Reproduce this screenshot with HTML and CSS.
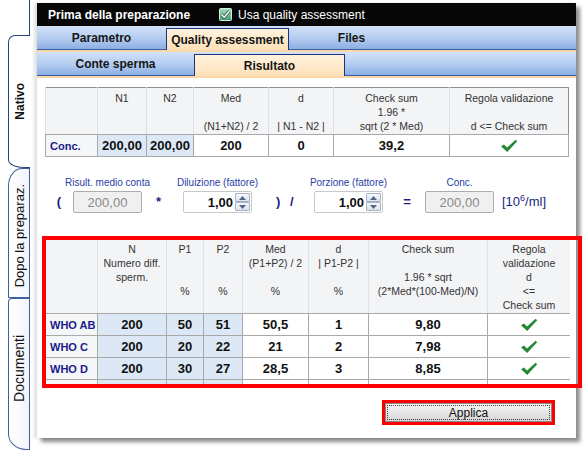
FILE: index.html
```html
<!DOCTYPE html>
<html lang="it">
<head>
    <meta charset="UTF-8">
    <title>Quality assessment - Risultato</title>
    <link rel="stylesheet" href="styles.css">
</head>
<body>
<div class="screen">
    <nav class="side-tabs">
        <div class="side-top"></div>
        <div class="side-tab active"><span>Nativo</span></div>
        <div class="side-tab dopo"><span>Dopo la preparaz.</span></div>
        <div class="side-tab docs"><span>Documenti</span></div>
    </nav>

    <div class="panel">
        <div class="panel-head">
            <span class="panel-title">Prima della preparazione</span>
            <span class="qa-check">
                <svg width="13" height="13" viewBox="0 0 13 13">
                    <defs>
                        <linearGradient id="cb" x1="0" y1="0" x2="0" y2="1">
                            <stop offset="0" stop-color="#a9e0c2"/>
                            <stop offset="1" stop-color="#3f9b6c"/>
                        </linearGradient>
                    </defs>
                    <rect x="0.5" y="0.5" width="12" height="12" rx="1" fill="url(#cb)" stroke="#d8efe2"/>
                    <path d="M2.5 6.5 L5.2 9.3 L10.5 3" fill="none" stroke="#1d4d35" stroke-width="3"/>
                    <path d="M2.5 6.5 L5.2 9.3 L10.5 3" fill="none" stroke="#fff" stroke-width="1.6"/>
                </svg>
                Usa quality assessment
            </span>
        </div>

        <div class="tabbar">
            <div class="tab w-param">Parametro</div>
            <div class="tab active w-qa">Quality assessment</div>
            <div class="tab w-files">Files</div>
        </div>
        <div class="stripe"></div>
        <div class="tabbar">
            <div class="tab w-conte">Conte sperma</div>
            <div class="tab active w-ris">Risultato</div>
        </div>
        <div class="stripe"></div>

        <div class="content">
            <table class="grid results">
                <colgroup>
                    <col style="width:52px"><col style="width:49px"><col style="width:47px"><col style="width:75px">
                    <col style="width:65px"><col style="width:116px"><col style="width:119px">
                </colgroup>
                <tr class="head">
                    <th></th>
                    <th>N1</th>
                    <th>N2</th>
                    <th>Med<br><br>(N1+N2) / 2</th>
                    <th>d<br><br>| N1 - N2 |</th>
                    <th>Check sum<br>1.96 *<br>sqrt (2 * Med)</th>
                    <th>Regola validazione<br><br>d &lt;= Check sum</th>
                </tr>
                <tr>
                    <td class="row-label">Conc.</td>
                    <td class="entered">200,00</td>
                    <td class="entered">200,00</td>
                    <td>200</td>
                    <td>0</td>
                    <td>39,2</td>
                    <td><svg class="ok" width="18" height="14" viewBox="0 0 18 14"><path d="M1 7.2 L4 5.4 L7 8.6 L15.6 0.8 L17.2 2.2 L7.2 13 Z" fill="#258a36"/></svg></td>
                </tr>
            </table>

            <div class="calc">
                <span class="op open">(</span>
                <div class="field">
                    <div class="field-label">Risult. medio conta</div>
                    <div class="box readonly">200,00</div>
                </div>
                <span class="op times">*</span>
                <div class="field">
                    <div class="field-label">Diluizione (fattore)</div>
                    <div class="box spin">
                        <span>1,00</span>
                        <span class="spinner">
                            <span class="spin-btn"><svg width="7" height="4" viewBox="0 0 7 4"><path d="M0 4 L3.5 0 L7 4 Z" fill="#53658c"/></svg></span>
                            <span class="spin-btn"><svg width="7" height="4" viewBox="0 0 7 4"><path d="M0 0 L3.5 4 L7 0 Z" fill="#53658c"/></svg></span>
                        </span>
                    </div>
                </div>
                <span class="op close">)</span>
                <span class="op slash">/</span>
                <div class="field">
                    <div class="field-label">Porzione (fattore)</div>
                    <div class="box spin">
                        <span>1,00</span>
                        <span class="spinner">
                            <span class="spin-btn"><svg width="7" height="4" viewBox="0 0 7 4"><path d="M0 4 L3.5 0 L7 4 Z" fill="#53658c"/></svg></span>
                            <span class="spin-btn"><svg width="7" height="4" viewBox="0 0 7 4"><path d="M0 0 L3.5 4 L7 0 Z" fill="#53658c"/></svg></span>
                        </span>
                    </div>
                </div>
                <span class="op equals">=</span>
                <div class="field">
                    <div class="field-label">Conc.</div>
                    <div class="box readonly">200,00</div>
                </div>
                <span class="unit">[10<sup>6</sup>/ml]</span>
            </div>

            <div class="who">
                <div class="who-scroll">
                    <table class="grid checks">
                        <colgroup>
                            <col style="width:52px"><col style="width:69px"><col style="width:37px"><col style="width:39px">
                            <col style="width:66px"><col style="width:60px"><col style="width:119px"><col style="width:83px">
                        </colgroup>
                        <tr class="head">
                            <th></th>
                            <th>N<br>Numero diff.<br>sperm.</th>
                            <th>P1<br><br><br>%</th>
                            <th>P2<br><br><br>%</th>
                            <th>Med<br>(P1+P2) / 2<br><br>%</th>
                            <th>d<br>| P1-P2 |<br><br>%</th>
                            <th>Check sum<br><br>1.96 * sqrt<br>(2*Med*(100-Med)/N)</th>
                            <th>Regola<br>validazione<br>d<br>&lt;=<br>Check sum</th>
                        </tr>
                        <tr>
                            <td class="row-label">WHO AB</td>
                            <td class="entered">200</td>
                            <td class="entered">50</td>
                            <td class="entered">51</td>
                            <td>50,5</td>
                            <td>1</td>
                            <td>9,80</td>
                            <td><svg class="ok" width="18" height="14" viewBox="0 0 18 14"><path d="M1 7.2 L4 5.4 L7 8.6 L15.6 0.8 L17.2 2.2 L7.2 13 Z" fill="#258a36"/></svg></td>
                        </tr>
                        <tr>
                            <td class="row-label">WHO C</td>
                            <td class="entered">200</td>
                            <td class="entered">20</td>
                            <td class="entered">22</td>
                            <td>21</td>
                            <td>2</td>
                            <td>7,98</td>
                            <td><svg class="ok" width="18" height="14" viewBox="0 0 18 14"><path d="M1 7.2 L4 5.4 L7 8.6 L15.6 0.8 L17.2 2.2 L7.2 13 Z" fill="#258a36"/></svg></td>
                        </tr>
                        <tr>
                            <td class="row-label">WHO D</td>
                            <td class="entered">200</td>
                            <td class="entered">30</td>
                            <td class="entered">27</td>
                            <td>28,5</td>
                            <td>3</td>
                            <td>8,85</td>
                            <td><svg class="ok" width="18" height="14" viewBox="0 0 18 14"><path d="M1 7.2 L4 5.4 L7 8.6 L15.6 0.8 L17.2 2.2 L7.2 13 Z" fill="#258a36"/></svg></td>
                        </tr>
                        <tr>
                            <td class="row-label">Media</td>
                            <td class="entered">200</td>
                            <td class="entered">45</td>
                            <td class="entered">44</td>
                            <td>44,5</td>
                            <td>1</td>
                            <td>9,74</td>
                            <td><svg class="ok" width="18" height="14" viewBox="0 0 18 14"><path d="M1 7.2 L4 5.4 L7 8.6 L15.6 0.8 L17.2 2.2 L7.2 13 Z" fill="#258a36"/></svg></td>
                        </tr>
                    </table>
                </div>
            </div>

            <div class="actions">
                <div class="apply-frame">
                    <button class="apply">Applica</button>
                </div>
            </div>
        </div>
    </div>
</div>
</body>
</html>
```

FILE: styles.css
```css
* {
    box-sizing: border-box;
}

body {
    margin: 0;
    width: 583px;
    height: 452px;
    overflow: hidden;
    background: #fff;
    font-family: "Liberation Sans", Arial, sans-serif;
    color: #111;
}

.screen {
    display: flex;
    height: 452px;
}

/* vertical tabs on the left */
.side-tabs {
    width: 37px;
    padding-left: 8px;
    display: flex;
    flex-direction: column;
}

.side-top {
    height: 35px;
    width: 22px;
    border-right: 1px solid #24437f;
}

.side-tab {
    width: 22px;
    display: flex;
    align-items: center;
    justify-content: center;
    border: 1px solid #3d5f9f;
    background: linear-gradient(to right, #ffffff, #f1f4fa);
}

.side-tab span {
    writing-mode: vertical-rl;
    transform: rotate(180deg);
    white-space: nowrap;
    font-size: 13px;
    color: #111;
}

.side-tab.active {
    height: 133px;
    border-color: #24437f;
    border-right: none;
    border-radius: 7px 0 0 16px / 7px 0 0 8px;
    background: #fff;
}

.side-tab.active span {
    font-weight: bold;
    font-size: 12px;
}

.side-tab.dopo {
    height: 130px;
    border-top-left-radius: 14px 18px;
    padding-top: 6px;
}

.side-tab.docs {
    height: 152px;
    border-radius: 4px 0 0 18px / 4px 0 0 16px;
    padding-bottom: 12px;
}

.side-tab.docs span {
    font-size: 14px;
}

/* main window */
.panel {
    width: 539px;
    height: 435px;
    margin-top: 3px;
    background: #fff;
    display: flex;
    flex-direction: column;
    box-shadow: 4px 4px 4px rgba(0, 0, 0, 0.45), -3px 0 3px rgba(0, 0, 0, 0.12);
}

.panel-head {
    height: 23px;
    background: #070707;
    color: #fff;
    display: flex;
    align-items: center;
    padding-left: 11px;
    font-size: 12px;
}

.panel-title {
    font-weight: bold;
    width: 171px;
}

.qa-check {
    display: flex;
    align-items: center;
    gap: 6px;
}

.tabbar {
    display: flex;
    height: 24px;
    background: linear-gradient(#d3e2f7, #b2cbef 55%, #8cafe3);
    border-bottom: 1px solid #3a5ca4;
}

.tab {
    display: flex;
    align-items: center;
    justify-content: center;
    font-size: 12px;
    font-weight: bold;
    color: #161616;
}

.tab.active {
    margin-top: 2px;
    margin-bottom: -1px;
    background: linear-gradient(#fff3de, #fde0b8);
    border: 1px solid #1f2f7c;
    border-bottom: none;
}

.w-param { width: 129px; }
.w-qa { width: 123px; }
.w-files { width: 125px; }
.w-conte { width: 157px; }
.w-ris { width: 151px; }

.stripe {
    height: 2px;
    background: #fbd8a9;
}

.content {
    padding: 9px 7px 0 8px;
}

/* tables */
.grid {
    border-collapse: collapse;
    table-layout: fixed;
}

.grid th {
    background: #f3f4f6;
    font-weight: normal;
    font-size: 10.5px;
    color: #333;
    line-height: 14px;
    vertical-align: top;
    text-align: center;
    white-space: nowrap;
    padding: 3px 0 0;
    border-left: 1px solid #e0e1e4;
    border-bottom: 1px solid #a9a9a9;
}

.grid td {
    height: 22px;
    padding: 0;
    border: 1px solid #a9a9a9;
    text-align: center;
    font-size: 13px;
    font-weight: bold;
    color: #111;
}

.grid td.row-label {
    text-align: left;
    padding-left: 4px;
    font-size: 11px;
    color: #1b1b8c;
    background: #f5f6f8;
}

.grid td.entered {
    background: #dce8f6;
}

.ok {
    display: block;
    margin: 1px auto 0;
}

.results {
    width: 523px;
    border: 1px solid #8f8f8f;
}

.results .head {
    height: 47px;
}

/* calculation row */
.calc {
    display: flex;
    align-items: flex-end;
    margin-top: 20px;
}

.field {
    width: 69px;
    display: flex;
    flex-direction: column;
    align-items: center;
}

.field-label {
    font-size: 10px;
    line-height: 12px;
    color: #2a3da6;
    white-space: nowrap;
    margin-bottom: 2px;
}

.box {
    width: 69px;
    height: 22px;
    border-radius: 2px;
    font-size: 13px;
    display: flex;
    align-items: center;
}

.box.readonly {
    justify-content: center;
    background: #f0f0f0;
    border: 1px solid #adadad;
    color: #8a8a8a;
}

.box.spin {
    justify-content: flex-end;
    gap: 2px;
    padding-right: 1px;
    background: #fff;
    border: 1px solid #c8c8c8;
    font-weight: bold;
}

.spinner {
    display: flex;
    flex-direction: column;
    width: 15px;
}

.spin-btn {
    height: 9px;
    display: flex;
    align-items: center;
    justify-content: center;
    border: 1px solid #a8b1c3;
    border-radius: 1px;
    background: linear-gradient(#f6f8fb, #dce2ec);
}

.op {
    height: 22px;
    line-height: 22px;
    font-size: 13px;
    font-weight: bold;
    color: #1a1f80;
}

.op.open { width: 28px; text-align: center; }
.op.times { width: 41px; padding-left: 14px; }
.op.close { width: 37px; padding-left: 24px; }
.op.slash { width: 25px; padding-left: 1px; }
.op.equals { width: 42px; text-align: center; padding-left: 6px; }

.unit {
    height: 22px;
    line-height: 22px;
    padding-left: 8px;
    font-size: 13px;
    color: #1a1f80;
}

.unit sup {
    font-size: 9px;
    line-height: 0;
}

/* WHO table, with the red marker frame over it */
.who {
    position: relative;
    margin-top: 25px;
}

.who::after {
    content: "";
    position: absolute;
    left: -3px;
    top: -2px;
    width: 532px;
    height: 144px;
    border: 4px solid #f00;
}

.who-scroll {
    width: 525px;
    height: 148px;
    overflow: hidden;
}

.checks {
    width: 525px;
    border: 1px solid #8f8f8f;
}

.checks .head {
    height: 75px;
}

.actions {
    margin-top: 14px;
    display: flex;
    justify-content: flex-end;
    padding-right: 14px;
}

.apply-frame {
    width: 173px;
    height: 25px;
    border: 3px solid #f00;
}

.apply {
    display: block;
    width: 100%;
    height: 100%;
    margin: 0;
    border: 1px solid #8a8a8a;
    background: linear-gradient(#f4f4f4, #e6e6e6 50%, #d6d6d6);
    font-family: "Liberation Sans", Arial, sans-serif;
    font-size: 12px;
    color: #111;
    outline: 1px dotted #444;
    outline-offset: -3px;
}
```
